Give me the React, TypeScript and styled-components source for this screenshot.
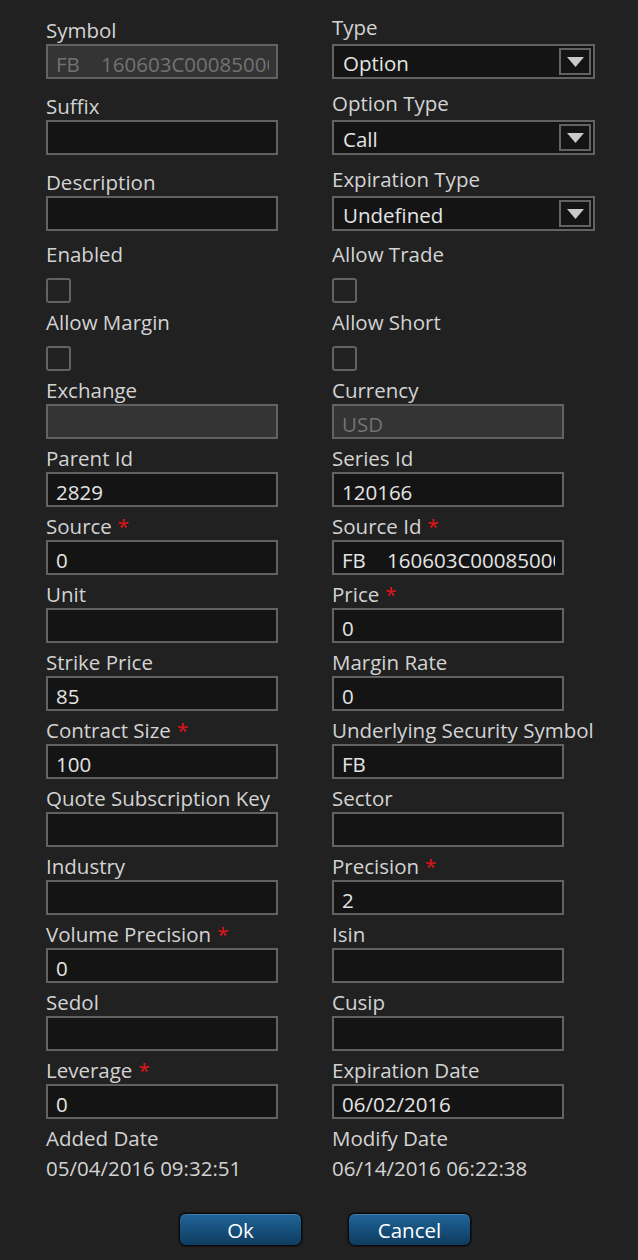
import React from "react";
import styled, { createGlobalStyle } from "styled-components";

const GlobalStyle = createGlobalStyle`
  html, body {
    margin: 0;
    padding: 0;
    background: #212121;
  }
  * { box-sizing: border-box; }
`;

const Page = styled.div`
  width: 638px;
  min-height: 1260px;
  background: #212121;
  font-family: "Open Sans", "Noto Sans", sans-serif;
  color: #d3d3d3;
`;

const Form = styled.div`
  padding: 18px 0 0 46px;
`;

const Row = styled.div<{ $h: number }>`
  display: grid;
  grid-template-columns: 286px 1fr;
  height: ${(p) => p.$h}px;
`;

const Field = styled.div`
  display: flex;
  flex-direction: column;
  align-items: flex-start;
`;

const Label = styled.div<{ $raise?: number }>`
  font-size: 20.5px;
  line-height: 24px;
  height: 24px;
  white-space: nowrap;
  color: #d3d3d3;
  margin-top: ${(p) => -(p.$raise ?? 0)}px;
  margin-bottom: ${(p) => 2 + (p.$raise ?? 0)}px;
`;

const Req = styled.span`
  color: #e5141b;
  margin-left: 6px;
`;

const TextInput = styled.input<{ $disabled?: boolean }>`
  width: 232px;
  height: 35px;
  border: 2px solid #626262;
  background: ${(p) => (p.$disabled ? "#343434" : "#141414")};
  color: ${(p) => (p.$disabled ? "#727272" : "#e4e4e4")};
  font-family: "Open Sans", "Noto Sans", sans-serif;
  font-size: 20.5px;
  line-height: 24px;
  padding: 5px 7px 0 8px;
  margin: 0;
  outline: none;
  border-radius: 0;
`;

const SelectBox = styled.div`
  width: 263px;
  height: 35px;
  border: 2px solid #626262;
  background: #141414;
  display: flex;
  align-items: center;
  justify-content: space-between;
  padding: 0 2px 0 9px;
  font-size: 20.5px;
  color: #e4e4e4;
`;

const SelectText = styled.span`
  padding-top: 2px;
`;

const SelectButton = styled.div`
  width: 32px;
  height: 27px;
  border: 2px solid #626262;
  display: flex;
  align-items: center;
  justify-content: center;
`;

const Check = styled.div`
  width: 25px;
  height: 25px;
  border: 2px solid #626262;
  border-radius: 3px;
  margin-top: 10px;
`;

const Value = styled.div`
  font-size: 20.5px;
  line-height: 24px;
  color: #d3d3d3;
  margin-top: 4px;
  white-space: nowrap;
`;

const Footer = styled.div`
  display: flex;
  justify-content: center;
  gap: 46px;
  padding-left: 12px;
  margin-top: 19px;
`;

const Button = styled.button`
  width: 123px;
  height: 33px;
  border-radius: 7px;
  border: 1px solid #0a0a0a;
  background: linear-gradient(#22659a 0%, #17527f 45%, #0e3b5f 100%);
  box-shadow: inset 0 1px 0 rgba(120, 170, 210, 0.35), 0 0 0 1px #141414;
  color: #ffffff;
  font-family: "Open Sans", "Noto Sans", sans-serif;
  font-size: 20.5px;
  line-height: 1;
  padding: 2px 0 0;
  cursor: pointer;
`;

type Item =
  | { kind: "text"; label: string; value?: string; req?: boolean; disabled?: boolean }
  | { kind: "select"; label: string; value: string }
  | { kind: "check"; label: string }
  | { kind: "info"; label: string; value: string };

const Arrow = () => (
  <svg width="17" height="10" viewBox="0 0 17 10">
    <polygon points="0,0 17,0 8.5,10" fill="#c6cbc5" />
  </svg>
);

const Cell: React.FC<{ item: Item }> = ({ item }) => {
  if (item.kind === "select") {
    return (
      <Field>
        <Label $raise={3}>{item.label}</Label>
        <SelectBox>
          <SelectText>{item.value}</SelectText>
          <SelectButton>
            <Arrow />
          </SelectButton>
        </SelectBox>
      </Field>
    );
  }
  if (item.kind === "check") {
    return (
      <Field>
        <Label>{item.label}</Label>
        <Check />
      </Field>
    );
  }
  if (item.kind === "info") {
    return (
      <Field>
        <Label>{item.label}</Label>
        <Value>{item.value}</Value>
      </Field>
    );
  }
  return (
    <Field>
      <Label>
        {item.label}
        {item.req && <Req>*</Req>}
      </Label>
      <TextInput
        readOnly
        value={item.value ?? ""}
        $disabled={item.disabled}
      />
    </Field>
  );
};

const SYM = "FB    160603C00085000";

const rows: { h: number; l: Item; r: Item }[] = [
  { h: 76, l: { kind: "text", label: "Symbol", value: SYM, disabled: true }, r: { kind: "select", label: "Type", value: "Option" } },
  { h: 76, l: { kind: "text", label: "Suffix" }, r: { kind: "select", label: "Option Type", value: "Call" } },
  { h: 72, l: { kind: "text", label: "Description" }, r: { kind: "select", label: "Expiration Type", value: "Undefined" } },
  { h: 68, l: { kind: "check", label: "Enabled" }, r: { kind: "check", label: "Allow Trade" } },
  { h: 68, l: { kind: "check", label: "Allow Margin" }, r: { kind: "check", label: "Allow Short" } },
  { h: 68, l: { kind: "text", label: "Exchange", disabled: true }, r: { kind: "text", label: "Currency", value: "USD", disabled: true } },
  { h: 68, l: { kind: "text", label: "Parent Id", value: "2829" }, r: { kind: "text", label: "Series Id", value: "120166" } },
  { h: 68, l: { kind: "text", label: "Source", value: "0", req: true }, r: { kind: "text", label: "Source Id", value: SYM, req: true } },
  { h: 68, l: { kind: "text", label: "Unit" }, r: { kind: "text", label: "Price", value: "0", req: true } },
  { h: 68, l: { kind: "text", label: "Strike Price", value: "85" }, r: { kind: "text", label: "Margin Rate", value: "0" } },
  { h: 68, l: { kind: "text", label: "Contract Size", value: "100", req: true }, r: { kind: "text", label: "Underlying Security Symbol", value: "FB" } },
  { h: 68, l: { kind: "text", label: "Quote Subscription Key" }, r: { kind: "text", label: "Sector" } },
  { h: 68, l: { kind: "text", label: "Industry" }, r: { kind: "text", label: "Precision", value: "2", req: true } },
  { h: 68, l: { kind: "text", label: "Volume Precision", value: "0", req: true }, r: { kind: "text", label: "Isin" } },
  { h: 68, l: { kind: "text", label: "Sedol" }, r: { kind: "text", label: "Cusip" } },
  { h: 68, l: { kind: "text", label: "Leverage", value: "0", req: true }, r: { kind: "text", label: "Expiration Date", value: "06/02/2016" } },
  { h: 68, l: { kind: "info", label: "Added Date", value: "05/04/2016 09:32:51" }, r: { kind: "info", label: "Modify Date", value: "06/14/2016 06:22:38" } },
];

export default function App() {
  return (
    <Page>
      <GlobalStyle />
      <Form>
        {rows.map((row, i) => (
          <Row key={i} $h={row.h}>
            <Cell item={row.l} />
            <Cell item={row.r} />
          </Row>
        ))}
      </Form>
      <Footer>
        <Button>Ok</Button>
        <Button>Cancel</Button>
      </Footer>
    </Page>
  );
}
